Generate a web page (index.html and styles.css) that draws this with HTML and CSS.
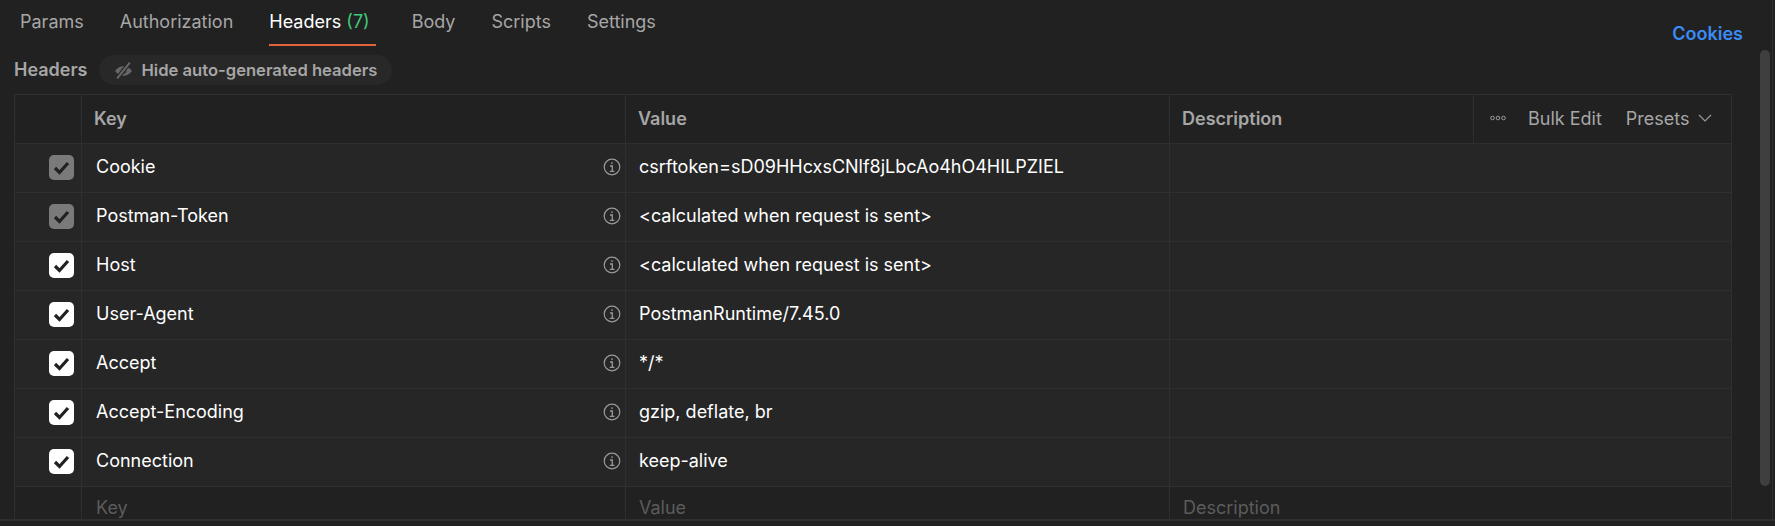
FILE: index.html
```html
<!DOCTYPE html>
<html lang="en">
<head>
<meta charset="utf-8">
<title>Headers</title>
<link rel="stylesheet" href="styles.css">
</head>
<body>
<div class="pane">
  <nav class="tabs">
    <a class="tab">Params</a>
    <a class="tab">Authorization</a>
    <a class="tab active">Headers <span class="count">(7)</span></a>
    <a class="tab">Body</a>
    <a class="tab">Scripts</a>
    <a class="tab">Settings</a>
    <a class="cookies">Cookies</a>
  </nav>
  <div class="toolbar">
    <span class="label">Headers</span>
    <span class="pill">
      <svg class="eye" viewBox="0 0 18 18" width="19" height="19"><path d="M1 9.500C3 6.500 5.700 5 9 5s6 1.500 8 4.500c-2 3-4.700 4.500-8 4.500s-6-1.500-8-4.500z" fill="#666"/><circle cx="9" cy="9.500" r="2.600" fill="#2a2a2a"/><path d="M3 16.500L15 1.500" stroke="#282828" stroke-width="4"/><path d="M3 16.500L15 1.500" stroke="#666" stroke-width="2"/></svg>
      <span class="pill-text">Hide auto-generated headers</span>
    </span>
  </div>
  <div class="table">
    <div class="row head">
      <div class="cell check"></div>
      <div class="cell key">Key</div>
      <div class="cell value">Value</div>
      <div class="cell desc">Description</div>
      <div class="cell actions">
        <svg viewBox="0 0 16 6" width="16" height="6"><g fill="none" stroke="#999" stroke-width="1"><circle cx="2.500" cy="3" r="1.800"/><circle cx="8" cy="3" r="1.800"/><circle cx="13.500" cy="3" r="1.800"/></g></svg>
        <span class="bulk">Bulk Edit</span>
        <span class="presets">Presets</span>
        <svg viewBox="0 0 14 8" width="14" height="8"><path d="M1 1l6 6 6-6" fill="none" stroke="#999" stroke-width="1.200"/></svg>
      </div>
    </div>
    <div class="row body">
      <div class="cell check"><span class="box dim"><svg viewBox="0 0 25 25"><path d="M6 13l4.500 4.500L19 8" fill="none" stroke="#212121" stroke-width="3.200"/></svg></span></div>
      <div class="cell key"><span class="text">Cookie</span><svg class="info" viewBox="0 0 18 18"><circle cx="9" cy="9" r="7.800" fill="none" stroke="#999" stroke-width="1.200"/><path d="M9 4.300v1.600M7 8h2.300v5M6.800 13.300h4.600" fill="none" stroke="#999" stroke-width="1.300"/></svg></div>
      <div class="cell value"><span class="text">csrftoken=sD09HHcxsCNlf8jLbcAo4hO4HILPZIEL</span></div>
      <div class="cell wide"></div>
    </div>
    <div class="row body">
      <div class="cell check"><span class="box dim"><svg viewBox="0 0 25 25"><path d="M6 13l4.500 4.500L19 8" fill="none" stroke="#212121" stroke-width="3.200"/></svg></span></div>
      <div class="cell key"><span class="text">Postman-Token</span><svg class="info" viewBox="0 0 18 18"><circle cx="9" cy="9" r="7.800" fill="none" stroke="#999" stroke-width="1.200"/><path d="M9 4.300v1.600M7 8h2.300v5M6.800 13.300h4.600" fill="none" stroke="#999" stroke-width="1.300"/></svg></div>
      <div class="cell value"><span class="text">&lt;calculated when request is sent&gt;</span></div>
      <div class="cell wide"></div>
    </div>
    <div class="row body">
      <div class="cell check"><span class="box"><svg viewBox="0 0 25 25"><path d="M6 13l4.500 4.500L19 8" fill="none" stroke="#212121" stroke-width="3.200"/></svg></span></div>
      <div class="cell key"><span class="text">Host</span><svg class="info" viewBox="0 0 18 18"><circle cx="9" cy="9" r="7.800" fill="none" stroke="#999" stroke-width="1.200"/><path d="M9 4.300v1.600M7 8h2.300v5M6.800 13.300h4.600" fill="none" stroke="#999" stroke-width="1.300"/></svg></div>
      <div class="cell value"><span class="text">&lt;calculated when request is sent&gt;</span></div>
      <div class="cell wide"></div>
    </div>
    <div class="row body">
      <div class="cell check"><span class="box"><svg viewBox="0 0 25 25"><path d="M6 13l4.500 4.500L19 8" fill="none" stroke="#212121" stroke-width="3.200"/></svg></span></div>
      <div class="cell key"><span class="text">User-Agent</span><svg class="info" viewBox="0 0 18 18"><circle cx="9" cy="9" r="7.800" fill="none" stroke="#999" stroke-width="1.200"/><path d="M9 4.300v1.600M7 8h2.300v5M6.800 13.300h4.600" fill="none" stroke="#999" stroke-width="1.300"/></svg></div>
      <div class="cell value"><span class="text">PostmanRuntime/7.45.0</span></div>
      <div class="cell wide"></div>
    </div>
    <div class="row body">
      <div class="cell check"><span class="box"><svg viewBox="0 0 25 25"><path d="M6 13l4.500 4.500L19 8" fill="none" stroke="#212121" stroke-width="3.200"/></svg></span></div>
      <div class="cell key"><span class="text">Accept</span><svg class="info" viewBox="0 0 18 18"><circle cx="9" cy="9" r="7.800" fill="none" stroke="#999" stroke-width="1.200"/><path d="M9 4.300v1.600M7 8h2.300v5M6.800 13.300h4.600" fill="none" stroke="#999" stroke-width="1.300"/></svg></div>
      <div class="cell value"><span class="text">*/*</span></div>
      <div class="cell wide"></div>
    </div>
    <div class="row body">
      <div class="cell check"><span class="box"><svg viewBox="0 0 25 25"><path d="M6 13l4.500 4.500L19 8" fill="none" stroke="#212121" stroke-width="3.200"/></svg></span></div>
      <div class="cell key"><span class="text">Accept-Encoding</span><svg class="info" viewBox="0 0 18 18"><circle cx="9" cy="9" r="7.800" fill="none" stroke="#999" stroke-width="1.200"/><path d="M9 4.300v1.600M7 8h2.300v5M6.800 13.300h4.600" fill="none" stroke="#999" stroke-width="1.300"/></svg></div>
      <div class="cell value"><span class="text">gzip, deflate, br</span></div>
      <div class="cell wide"></div>
    </div>
    <div class="row body">
      <div class="cell check"><span class="box"><svg viewBox="0 0 25 25"><path d="M6 13l4.500 4.500L19 8" fill="none" stroke="#212121" stroke-width="3.200"/></svg></span></div>
      <div class="cell key"><span class="text">Connection</span><svg class="info" viewBox="0 0 18 18"><circle cx="9" cy="9" r="7.800" fill="none" stroke="#999" stroke-width="1.200"/><path d="M9 4.300v1.600M7 8h2.300v5M6.800 13.300h4.600" fill="none" stroke="#999" stroke-width="1.300"/></svg></div>
      <div class="cell value"><span class="text">keep-alive</span></div>
      <div class="cell wide"></div>
    </div>
    <div class="row empty">
      <div class="cell check"></div>
      <div class="cell key">Key</div>
      <div class="cell value">Value</div>
      <div class="cell wide">Description</div>
    </div>
  </div>
  <div class="scrollbar"></div>
</div>
</body>
</html>
```
FILE: styles.css
```css
* { box-sizing: border-box; }
html, body { margin: 0; height: 100%; background: #212121; overflow: hidden; }
body { font-family: Inter, "Noto Sans", sans-serif; font-size: 18px; color: #fff; }
.pane { position: relative; height: 526px; }
.pane::after { content: ""; position: absolute; left: 0; right: 0; top: 519px; height: 2px; background: #2f2f2f; }
.pane::before { content: ""; position: absolute; top: 0; height: 521px; right: 2px; width: 1px; background: #2f2f2f; }
.tabs { display: flex; height: 46px; padding-left: 20px; gap: 36px; align-items: flex-start; }
.tab { height: 46px; line-height: 44px; color: #a6a6a6; white-space: nowrap; }
.tab.active { color: #fff; border-bottom: 2px solid #e0633a; padding-right: 6px; }
.count { color: #3fc87a; }
.cookies { margin-left: auto; margin-right: 32px; margin-top: 13px; line-height: 42px; color: #3b8bf5; font-weight: 600; }
.toolbar { display: flex; align-items: center; height: 30px; margin-top: 9px; padding-left: 14px; gap: 11px; }
.label { color: #a6a6a6; font-weight: 600; padding-bottom: 2px; }
.pill { display: flex; align-items: center; gap: 9px; height: 30px; padding: 0 15px; border-radius: 15px; background: #282828; color: #a6a6a6; font-size: 16.6px; font-weight: 600; }
.pill-text { padding-bottom: 1px; }
.table { margin: 9px 0 0 14px; width: 1718px; border: solid #2f2f2f; border-width: 1px 1px 0; }
.row { display: grid; grid-template-columns: 67px 544px 544px 304px 1fr; height: 49px; border-bottom: 1px solid #2f2f2f; }
.row.body { background: #262626; }
.row.empty { border-bottom: 0; height: 33px; color: #5c5c5c; }
.cell { display: flex; align-items: center; padding: 0 12px; border-right: 1px solid #2f2f2f; min-width: 0; white-space: nowrap; }
.cell:last-child { border-right: 0; }
.cell.wide { grid-column: 4 / 6; }
.head .cell { color: #a6a6a6; font-weight: 600; padding: 0 0 2px 12px; }
.head .cell.check { padding: 0; }
.head .actions { padding-left: 16px; font-weight: 400; gap: 0; }
.bulk { margin-left: 22px; font-weight: 400; }
.presets { margin-left: 24px; margin-right: 8px; font-weight: 400; }
.check { justify-content: flex-end; padding: 0 7px 1px 0; }
.box { display: block; width: 25px; height: 25px; border-radius: 5px; background: #fff; }
.box.dim { background: #7a7a7a; }
.box svg { display: block; width: 25px; height: 25px; }
.key { justify-content: space-between; padding: 0 0 0 14px; }
.info { width: 18px; height: 18px; flex: none; margin: 0 4px 2px 0; }
.row.body .value, .row.empty .value { padding-left: 13px; }
.row.body .text { padding-bottom: 4px; }
.row.empty .wide { padding-left: 13px; }
.empty .key, .empty .value, .empty .wide { align-items: flex-start; padding-top: 10px; }
.scrollbar { position: absolute; top: 50px; left: 1760px; width: 10px; height: 436px; border-radius: 5px; background: #3f3f3f; }
```
